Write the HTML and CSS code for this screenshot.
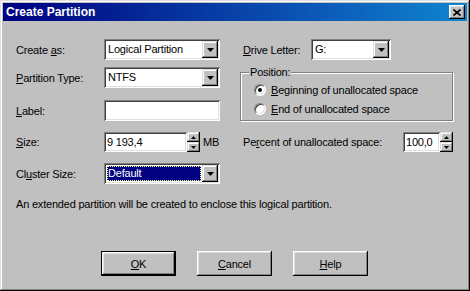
FILE: index.html
```html
<!DOCTYPE html>
<html lang="en">
<head>
  <meta charset="UTF-8">
  <title>Create Partition</title>
  <link rel="stylesheet" href="styles.css">
</head>
<body>

  <div class="window">
    <div class="titlebar">
      <span class="title">Create Partition</span>
      <button class="close" type="button">
        <svg width="8" height="7" viewBox="0 0 8 7"><path d="M0.5 0.5L7.5 6.5M7.5 0.5L0.5 6.5" stroke="#000" stroke-width="1.6"/></svg>
      </button>
    </div>

    <div class="content">
      <div class="columns">
        <div class="col-left">
          <div class="row r1">
            <span class="lbl">Create <u>a</u>s:</span>
            <div class="combo wide"><span class="val">Logical Partition</span><span class="drop"><svg width="7" height="4" viewBox="0 0 7 4"><path d="M0 0h7L3.5 4z"/></svg></span></div>
          </div>
          <div class="row r2">
            <span class="lbl"><u>P</u>artition Type:</span>
            <div class="combo wide"><span class="val">NTFS</span><span class="drop"><svg width="7" height="4" viewBox="0 0 7 4"><path d="M0 0h7L3.5 4z"/></svg></span></div>
          </div>
          <div class="row r3">
            <span class="lbl"><u>L</u>abel:</span>
            <div class="edit wide"></div>
          </div>
          <div class="row r4">
            <span class="lbl"><u>S</u>ize:</span>
            <div class="edit size">9 193,4</div>
            <div class="spin">
              <span class="spin-btn"><svg width="5" height="3" viewBox="0 0 5 3"><path d="M2.5 0L5 3H0z"/></svg></span>
              <span class="spin-btn"><svg width="5" height="3" viewBox="0 0 5 3"><path d="M0 0h5L2.5 3z"/></svg></span>
            </div>
            <span class="unit">MB</span>
          </div>
          <div class="row r5">
            <span class="lbl">Cl<u>u</u>ster Size:</span>
            <div class="combo wide"><span class="val sel">Default</span><span class="drop"><svg width="7" height="4" viewBox="0 0 7 4"><path d="M0 0h7L3.5 4z"/></svg></span></div>
          </div>
        </div>

        <div class="col-right">
          <div class="row r1">
            <span class="lbl drive"><u>D</u>rive Letter:</span>
            <div class="combo letter"><span class="val">G:</span><span class="drop"><svg width="7" height="4" viewBox="0 0 7 4"><path d="M0 0h7L3.5 4z"/></svg></span></div>
          </div>
          <fieldset class="group">
            <legend>Position:</legend>
            <div class="radio-row"><span class="radio checked"></span><span><u>B</u>eginning of unallocated space</span></div>
            <div class="radio-row"><span class="radio"></span><span><u>E</u>nd of unallocated space</span></div>
          </fieldset>
          <div class="row r4">
            <span class="lbl percent">Pe<u>r</u>cent of unallocated space:</span>
            <div class="edit pct">100,0</div>
            <div class="spin">
              <span class="spin-btn"><svg width="5" height="3" viewBox="0 0 5 3"><path d="M2.5 0L5 3H0z"/></svg></span>
              <span class="spin-btn"><svg width="5" height="3" viewBox="0 0 5 3"><path d="M0 0h5L2.5 3z"/></svg></span>
            </div>
          </div>
        </div>
      </div>

      <p class="note">An extended partition will be created to enclose this logical partition.</p>

      <div class="buttons">
        <button class="btn default" type="button"><u>O</u>K</button>
        <button class="btn" type="button"><u>C</u>ancel</button>
        <button class="btn" type="button"><u>H</u>elp</button>
      </div>
    </div>
  </div>

</body>
</html>
```

FILE: styles.css
```css
body {
  margin: 0;
  background-color: #c0c0c0;
  color: #000;
  font-family: "Liberation Sans", Arial, sans-serif;
  font-size: 11px;
  letter-spacing: -0.2px;
}
u {
  text-decoration-thickness: 1px;
  text-underline-offset: 1px;
}
.window {
  width: 470px;
  height: 291px;
  box-sizing: border-box;
  padding: 3px;
  background-color: #c0c0c0;
  box-shadow: inset -1px -1px #000, inset 1px 1px #dfdfdf, inset -2px -2px #808080, inset 2px 2px #fff;
}
.titlebar {
  height: 18px;
  padding: 0 2px 0 3px;
  display: flex;
  align-items: center;
  justify-content: space-between;
  background: linear-gradient(to right, #000080, #1084d0);
}
.title {
  color: #fff;
  font-weight: bold;
  font-size: 12px;
  letter-spacing: 0;
}
.close {
  width: 16px;
  height: 14px;
  padding: 0;
  border: none;
  display: flex;
  align-items: center;
  justify-content: center;
  background-color: #c0c0c0;
  box-shadow: inset -1px -1px #000, inset 1px 1px #fff, inset -2px -2px #808080, inset 2px 2px #dfdfdf;
}
.content {
  padding: 18px 14px 0 13px;
}
.columns {
  display: flex;
}
.col-left {
  width: 226px;
  display: flex;
  flex-direction: column;
}
.col-right {
  width: 214px;
  display: flex;
  flex-direction: column;
}
.row {
  display: flex;
  align-items: center;
  height: 21px;
}
.r2 { margin-top: 7px; }
.r3 { margin-top: 12px; }
.r4 { margin-top: 11px; height: 20px; }
.r5 { margin-top: 11px; }
.lbl {
  width: 88px;
  flex-shrink: 0;
}
.lbl.drive {
  width: 68px;
  padding-left: 3px;
}
.lbl.percent {
  width: 160px;
  padding-left: 3px;
}

/* sunken fields */
.combo, .edit {
  height: 100%;
  box-sizing: border-box;
  background-color: #fff;
  box-shadow: inset 1px 1px #808080, inset -1px -1px #fff, inset 2px 2px #404040, inset -2px -2px #dfdfdf;
}
.combo {
  display: flex;
  padding: 2px;
}
.wide { width: 116px; }
.letter { width: 80px; }
.val {
  flex: 1;
  padding-left: 2px;
  line-height: 17px;
  white-space: nowrap;
}
.val.sel {
  margin: 1px;
  padding-left: 1px;
  line-height: 15px;
  background-color: #000080;
  color: #fff;
  outline: 1px dotted #ffff80;
  outline-offset: -1px;
}
.drop {
  width: 16px;
  height: 17px;
  display: flex;
  align-items: center;
  justify-content: center;
  background-color: #c0c0c0;
  box-shadow: inset -1px -1px #000, inset 1px 1px #dfdfdf, inset -2px -2px #808080, inset 2px 2px #fff;
}
.edit {
  padding: 0 3px;
  line-height: 20px;
}
.size { width: 83px; }
.pct { width: 37px; }
.spin {
  width: 13px;
  height: 20px;
  display: flex;
  flex-direction: column;
}
.spin-btn {
  height: 10px;
  display: flex;
  align-items: center;
  justify-content: center;
  background-color: #c0c0c0;
  box-shadow: inset -1px -1px #000, inset 1px 1px #dfdfdf, inset -2px -2px #808080, inset 2px 2px #fff;
}
.unit {
  margin-left: 3px;
}

/* position group */
.group {
  margin: 6px 0 0;
  padding: 2px 0 2px 8px;
  height: 55px;
  box-sizing: border-box;
  border: 1px solid #808080;
  box-shadow: inset 1px 1px #fff, 1px 1px #fff;
}
.group legend {
  padding: 0 1px;
  line-height: 12px;
  background-color: #c0c0c0;
}
.radio-row {
  height: 19px;
  padding-left: 5px;
  display: flex;
  align-items: center;
  gap: 5px;
}
.radio {
  width: 12px;
  height: 12px;
  box-sizing: border-box;
  border-radius: 50%;
  border: 1px solid;
  border-color: #808080 #fff #fff #808080;
  background-color: #fff;
  box-shadow: inset 1px 1px #404040, inset -1px -1px #dfdfdf;
  display: flex;
  align-items: center;
  justify-content: center;
}
.radio.checked::after {
  content: "";
  width: 4px;
  height: 4px;
  border-radius: 50%;
  background-color: #000;
}

.note {
  margin: 14px 0 0;
  line-height: 13px;
}
.buttons {
  margin-top: 40px;
  display: flex;
  justify-content: center;
  gap: 21px;
}
.btn {
  width: 75px;
  height: 25px;
  padding: 0;
  border: none;
  font-family: inherit;
  font-size: 11px;
  letter-spacing: inherit;
  color: #000;
  background-color: #c0c0c0;
  box-shadow: inset -1px -1px #000, inset 1px 1px #fff, inset -2px -2px #808080, inset 2px 2px #dfdfdf;
}
.btn.default {
  box-shadow: inset 0 0 0 1px #000, inset -2px -2px #000, inset 2px 2px #fff, inset -3px -3px #808080, inset 3px 3px #dfdfdf;
}
```
